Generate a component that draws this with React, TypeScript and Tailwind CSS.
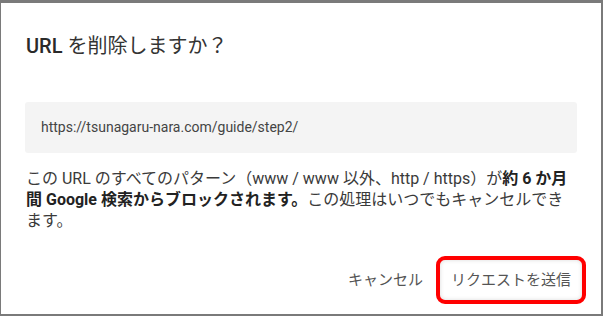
export default function App() {
  const font = { fontFamily: "Roboto, 'Noto Sans CJK JP', sans-serif" };
  return (
    <div className="w-[603px] h-[316px] bg-[#7a7a7a] pt-[3px] pl-[1px] pr-[2px] pb-[2px]" style={font}>
      <div className="w-full h-full bg-white flex flex-col">
        <div className="pl-[25px] pt-[30px] text-[20px] leading-[26px] text-[#333]">
          <span className="font-medium text-[#2a2a2a]">URL</span> を削除しますか？
        </div>
        <div className="mt-[43px] ml-[24px] w-[552px] h-[51px] bg-[#f4f4f4] rounded-[3px] flex items-center pl-[16px] text-[14px] text-[#444]">
          https://tsunagaru-nara.com/guide/step2/
        </div>
        <div className="mt-[15px] pl-[25px] text-[16px] leading-[21px] text-[#3a3a3a] whitespace-nowrap">
          <div>この URL のすべてのパターン（www / www 以外、http / https）が<b className="font-bold text-[#222]">約 6 か月</b></div>
          <div><b className="font-bold text-[#222]">間 Google 検索からブロックされます。</b>この処理はいつでもキャンセルでき</div>
          <div>ます。</div>
        </div>
        <div className="mt-auto mb-[10px] flex justify-end items-center pr-[15px]">
          <div className="text-[15px] text-[#555] mr-[13px]">キャンセル</div>
          <div className="w-[150px] h-[48px] border-[4px] border-[#f00] rounded-[9px] flex items-center justify-center text-[15px] text-[#555] shadow-[inset_0_0_4px_rgba(0,0,0,0.15)]">
            リクエストを送信
          </div>
        </div>
      </div>
    </div>
  );
}
